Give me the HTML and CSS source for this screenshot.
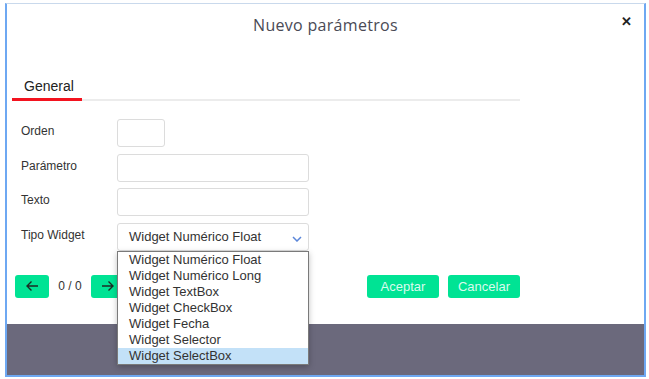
FILE: index.html
```html
<!DOCTYPE html>
<html lang="es">
<head>
    <meta charset="UTF-8" />
    <title>Nuevo parámetros</title>
    <link rel="stylesheet" href="styles.css">
</head>
<body>

    <div class="frame">
        <div class="modal">
            <div class="modal-header">
                <h2>Nuevo parámetros</h2>
                <span class="close">&#10005;</span>
            </div>

            <div class="tabs">
                <div class="tab active">General</div>
            </div>

            <div class="form">
                <div class="row">
                    <label>Orden</label>
                    <div class="input small"></div>
                </div>
                <div class="row">
                    <label>Parámetro</label>
                    <div class="input"></div>
                </div>
                <div class="row">
                    <label>Texto</label>
                    <div class="input"></div>
                </div>
                <div class="row">
                    <label>Tipo Widget</label>
                    <div class="select-wrap">
                        <div class="input select">
                            <span>Widget Numérico Float</span>
                            <svg width="10" height="6" viewBox="0 0 10 6"><path d="M1 1 L5 5 L9 1" fill="none" stroke="#5b86d9" stroke-width="1.5"/></svg>
                        </div>
                        <ul class="dropdown">
                            <li>Widget Numérico Float</li>
                            <li>Widget Numérico Long</li>
                            <li>Widget TextBox</li>
                            <li>Widget CheckBox</li>
                            <li>Widget Fecha</li>
                            <li>Widget Selector</li>
                            <li class="selected">Widget SelectBox</li>
                        </ul>
                    </div>
                </div>
            </div>

            <div class="actions">
                <div class="pager">
                    <button class="btn arrow">
                        <svg width="14" height="12" viewBox="0 0 14 12"><path d="M13 6 H2 M6.5 1.5 L2 6 L6.5 10.5" fill="none" stroke="#1d2b24" stroke-width="1.4"/></svg>
                    </button>
                    <span class="count">0 / 0</span>
                    <button class="btn arrow">
                        <svg width="14" height="12" viewBox="0 0 14 12"><path d="M1 6 H12 M7.5 1.5 L12 6 L7.5 10.5" fill="none" stroke="#1d2b24" stroke-width="1.4"/></svg>
                    </button>
                </div>
                <div class="buttons">
                    <button class="btn text">Aceptar</button>
                    <button class="btn text">Cancelar</button>
                </div>
            </div>
        </div>
        <div class="backdrop"></div>
    </div>

</body>
</html>
```

FILE: styles.css
```css
* {
    box-sizing: border-box;
    margin: 0;
    padding: 0;
}

body {
    background: #fff;
    font-family: 'Liberation Sans', Arial, sans-serif;
    color: #333;
}

.frame {
    margin: 3px 3px 0 5px;
    width: 641px;
    height: 374px;
    border: 2px solid #6ea8f2;
    border-top: 1px solid #c9d9ec;
    display: flex;
    flex-direction: column;
}

.modal {
    height: 320px;
    background: #fff;
    display: flex;
    flex-direction: column;
}

.backdrop {
    flex: 1;
    background: #6b697c;
}

.modal-header {
    position: relative;
    height: 40px;
    text-align: center;
}

.modal-header h2 {
    padding-top: 10px;
    font-family: 'Open Sans', sans-serif;
    font-weight: 400;
    font-size: 16px;
    letter-spacing: 0.3px;
    color: #4a4a55;
}

.close {
    position: absolute;
    top: 10px;
    right: 12px;
    font-size: 13px;
    font-weight: bold;
    color: #222;
}

.tabs {
    margin: 34px 0 0 5px;
    width: 508px;
    display: flex;
    border-bottom: 2px solid #ececec;
}

.tab {
    padding: 0 8px 3px 12px;
    font-size: 14px;
    line-height: 17px;
    color: #222;
}

.tab.active {
    border-bottom: 3px solid #f3131f;
    margin-bottom: -2px;
}

.form {
    margin: 18px 0 0 14px;
    display: flex;
    flex-direction: column;
    gap: 6.66px;
}

.row {
    display: flex;
    align-items: flex-start;
}

.row label {
    width: 96px;
    font-size: 12px;
    padding-top: 5px;
    color: #333;
}

.input {
    width: 192px;
    height: 28px;
    border: 1px solid #dcdcdc;
    border-radius: 3px;
}

.input.small {
    width: 48px;
}

.select-wrap {
    position: relative;
}

.select {
    display: flex;
    align-items: center;
    justify-content: space-between;
    padding: 0 6px 0 11px;
    font-size: 13px;
    color: #333;
}

.select svg {
    margin-top: 4px;
}

.dropdown {
    position: absolute;
    top: 28px;
    left: 0;
    width: 192px;
    list-style: none;
    background: #fff;
    border: 1px solid #7a7a7a;
    box-shadow: 0 2px 6px rgba(0,0,0,0.25);
    z-index: 2;
}

.dropdown li {
    height: 16px;
    line-height: 16px;
    padding-left: 11px;
    font-size: 13px;
    color: #333;
}

.dropdown li.selected {
    background: #c3e1f8;
}

.actions {
    margin: 24px 0 0 8px;
    width: 505px;
    display: flex;
    justify-content: space-between;
}

.pager,
.buttons {
    display: flex;
    align-items: center;
}

.buttons {
    gap: 9px;
}

.btn {
    height: 23px;
    border: none;
    border-radius: 3px;
    background: #00e394;
    display: flex;
    align-items: center;
    justify-content: center;
}

.btn.arrow {
    width: 34px;
}

.btn.text {
    width: 72px;
    font-family: 'Liberation Sans', Arial, sans-serif;
    font-size: 13px;
    color: #d9fbee;
}

.count {
    width: 42px;
    text-align: center;
    font-size: 12px;
    color: #333;
}
```
